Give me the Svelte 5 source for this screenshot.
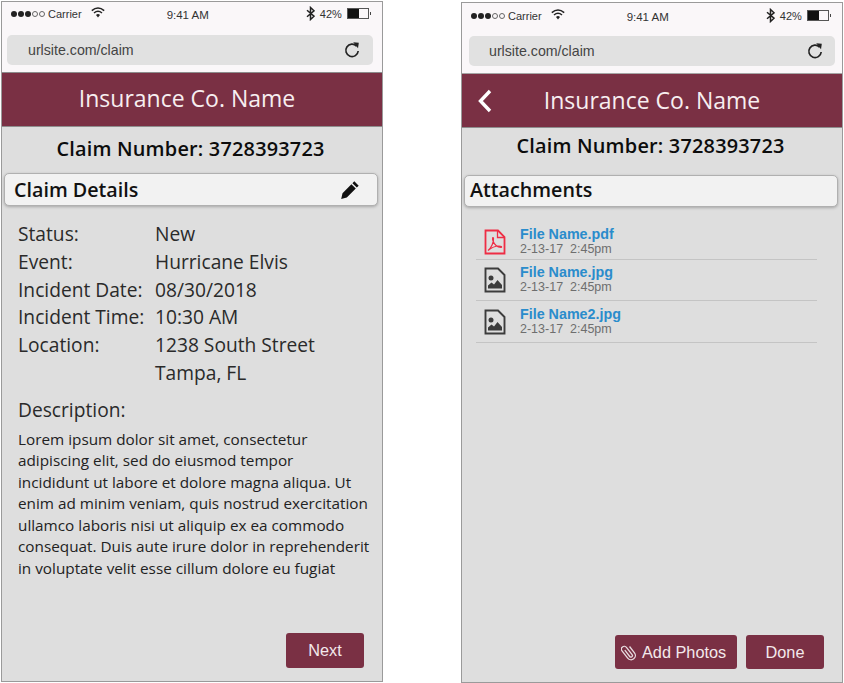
<script>
  const details = [
    ['Status:', 'New'],
    ['Event:', 'Hurricane Elvis'],
    ['Incident Date:', '08/30/2018'],
    ['Incident Time:', '10:30 AM'],
    ['Location:', '1238 South Street'],
    ['', 'Tampa, FL']
  ];
  const lorem = [
    'Lorem ipsum dolor sit amet, consectetur',
    'adipiscing elit, sed do eiusmod tempor',
    'incididunt ut labore et dolore magna aliqua. Ut',
    'enim ad minim veniam, quis nostrud exercitation',
    'ullamco laboris nisi ut aliquip ex ea commodo',
    'consequat. Duis aute irure dolor in reprehenderit',
    'in voluptate velit esse cillum dolore eu fugiat'
  ];
  const files = [
    { name: 'File Name.pdf', kind: 'pdf' },
    { name: 'File Name.jpg', kind: 'img' },
    { name: 'File Name2.jpg', kind: 'img' }
  ];
</script>

{#snippet chrome()}
  <div class="chrome">
    <div class="status">
      <span class="signal"><i></i><i></i><i></i><i class="off"></i><i class="off"></i></span>
      <span class="carrier">Carrier</span>
      <svg class="wifi" width="14" height="11" viewBox="0 0 14 11">
        <path d="M.8 3.600C4.600.4 9.400.4 13.200 3.600M3 6C5.400 4 8.600 4 11 6" fill="none" stroke="#222" stroke-width="1.500"/>
        <path d="M5 8a3 3 0 0 1 4 0L7 10.600z" fill="#222"/>
      </svg>
      <span class="time">9:41 AM</span>
      <svg class="bt" width="9" height="15" viewBox="0 0 9 15">
        <path d="M1 4.200l7 6L4.500 13.500V1.500L8 4.800 1 10.800" fill="none" stroke="#222" stroke-width="1.500"/>
      </svg>
      <span class="pct">42%</span>
      <span class="battery"><b></b></span>
    </div>
    <div class="url">
      <span>urlsite.com/claim</span>
      <svg width="18" height="18" viewBox="0 0 18 18">
        <path d="M13.600 5.200A6.200 6.200 0 1 0 15.200 10" fill="none" stroke="#222" stroke-width="1.700"/>
        <path d="M10.200 1.200l5.600 .6-.8 5.400z" fill="#222"/>
      </svg>
    </div>
  </div>
{/snippet}

<div class="page">
  <section class="phone left">
    {@render chrome()}
    <header class="bar"><h1>Insurance Co. Name</h1></header>
    <h2 class="claim">Claim Number: 3728393723</h2>
    <div class="panel">
      <span>Claim Details</span>
      <svg width="20" height="20" viewBox="0 0 20 20">
        <path d="M14.300 1.300l4.400 4.400-1.900 1.900-4.400-4.400zM11.400 4.200l4.400 4.400-9 9L1.200 19l1.300-5.700z" fill="#111"/>
      </svg>
    </div>
    <div class="details">
      {#each details as [k, v]}
        <div class="row"><span>{k}</span><span>{v}</span></div>
      {/each}
    </div>
    <div class="desc">Description:</div>
    <div class="lorem">
      {#each lorem as l}<div>{l}</div>{/each}
    </div>
    <footer class="foot"><button class="btn">Next</button></footer>
  </section>

  <section class="phone right">
    {@render chrome()}
    <header class="bar">
      <svg class="back" width="16" height="24" viewBox="0 0 16 24">
        <path d="M13 2L3.500 12l9.500 10" fill="none" stroke="#fff" stroke-width="3.400"/>
      </svg>
      <h1>Insurance Co. Name</h1>
    </header>
    <h2 class="claim">Claim Number: 3728393723</h2>
    <div class="panel"><span>Attachments</span></div>
    <ul class="files">
      {#each files as f}
        <li>
          {#if f.kind === 'pdf'}
            <svg width="22" height="26" viewBox="0 0 22 26">
              <path d="M1.500 1.500H14L20.500 8V24.500H1.500z" fill="none" stroke="#ee2d45" stroke-width="1.800"/>
              <path d="M13.500 1.500V8.500H20.500" fill="none" stroke="#ee2d45" stroke-width="1.300"/>
              <path d="M4 21.500C7 19.500 10 13 9.500 9.500 9 7.500 8 9 9 12c1.500 4 4 6 8 6.500 1.500-.5 0-1.500-2-1.500-4 0-8 2-11 4.500z" fill="none" stroke="#ee2d45" stroke-width="1.200"/>
            </svg>
          {:else}
            <svg width="22" height="26" viewBox="0 0 22 26">
              <path d="M1.500 1.500H14L20.500 8V24.500H1.500z" fill="none" stroke="#3c3c3c" stroke-width="1.900"/>
              <circle cx="7" cy="11" r="2.500" fill="#3c3c3c"/>
              <path d="M4 21.500V18.500L7.500 15.500l2.500 2 3.500-4.500 4.500 5v3.500z" fill="#3c3c3c"/>
            </svg>
          {/if}
          <div class="meta">
            <a href="#top">{f.name}</a>
            <small>2-13-17&nbsp; 2:45pm</small>
          </div>
        </li>
      {/each}
    </ul>
    <footer class="foot">
      <button class="btn add">
        <svg width="16" height="18" viewBox="0 0 16 18">
          <path d="M5.800 5v8a1.500 1.500 0 0 0 3 0V3.800a2.800 2.800 0 0 0-5.600 0V13a4.300 4.300 0 0 0 8.600 0V5" transform="rotate(-38 8 9)" fill="none" stroke="#e8dde0" stroke-width="1.300"/>
        </svg>
        Add Photos
      </button>
      <button class="btn">Done</button>
    </footer>
  </section>
</div>

<style>
  :global(body) { margin: 0; background: #fff; }
  .page {
    width: 844px;
    height: 683px;
    display: flex;
    gap: 78px;
    padding-left: 1px;
    box-sizing: border-box;
    overflow: hidden;
    font-family: "Open Sans", "Noto Sans", sans-serif;
    color: #111;
  }
  .phone {
    width: 382px;
    flex: none;
    box-sizing: border-box;
    border: 1px solid #9a9a9a;
    background: #dedede;
    display: flex;
    flex-direction: column;
    height: 681px;
    margin-top: 1px;
  }
  .phone.right { margin-top: 2px; }
  .chrome {
    background: #faf7f9;
    height: 71px;
    padding: 0 9px 0 5px;
    box-sizing: border-box;
    font-family: "Liberation Sans", Arial, sans-serif;
    border-bottom: 1px solid #8c8c8c;
  }
  .right .chrome { padding: 0 7px; border-bottom-color: #a5a5a5; }
  .status {
    height: 33px;
    display: flex;
    align-items: center;
    font-size: 11px;
    color: #333;
    padding: 0 4px;
    position: relative;
    top: -5px;
  }
  .right .status { padding: 0 2px; top: -4px; }
  .signal { display: flex; gap: 1px; }
  .signal i { width: 6px; height: 6px; border-radius: 50%; background: #222; display: block; box-sizing: border-box; }
  .signal i.off { background: none; border: 1px solid #666; }
  .carrier { margin-left: 3px; }
  .wifi { margin-left: 9px; margin-top: -3px; }
  .time { margin-left: 62px; font-size: 11.500px; position: relative; top: 1px; }
  .bt { margin-left: 97px; }
  .pct { margin-left: 5px; }
  .battery {
    margin-left: 5px;
    width: 22px;
    height: 11px;
    border: 1px solid #555;
    box-sizing: border-box;
    position: relative;
    display: block;
  }
  .battery b { display: block; width: 11px; height: 9px; background: #111; }
  .battery::after {
    content: "";
    position: absolute;
    right: -3px;
    top: 3px;
    width: 1px;
    height: 3px;
    background: #444;
  }
  .url {
    height: 30px;
    background: #e1e1e1;
    border-radius: 5px;
    display: flex;
    align-items: center;
    justify-content: space-between;
    padding: 0 12px 0 21px;
    font-size: 14.200px;
    color: #444;
  }
  .right .url { padding: 0 11px 0 20px; }
  .bar {
    height: 54px;
    box-sizing: border-box;
    background: #7a3044;
    border-bottom: 1px solid #8e8e8e;
    display: flex;
    align-items: center;
    justify-content: center;
    position: relative;
    padding-bottom: 2px;
  }
  .left .bar { padding: 0 10px 4px 0; }
  h1 { margin: 0; font-size: 23px; font-weight: 400; color: #f7eef0; }
  .back { position: absolute; left: 15px; top: 15px; }
  .claim {
    margin: 0;
    padding-right: 3px;
    text-align: center;
    font-size: 19.900px;
    font-weight: 600;
    color: #0c0c0c;
    height: 46px;
    line-height: 44px;
    letter-spacing: .2px;
  }
  .right .claim { height: 47px; line-height: 36px; }
  .panel {
    margin: 0 4px 0 2px;
    height: 33px;
    box-sizing: border-box;
    background: #f2f2f2;
    border: 1px solid #b0b0b0;
    border-radius: 5px;
    box-shadow: 0 1px 3px rgba(0,0,0,.25);
    display: flex;
    align-items: center;
    justify-content: space-between;
    padding: 0 17px 0 9px;
    font-size: 19.700px;
    font-weight: 600;
    color: #111;
  }
  .right .panel { height: 32px; padding: 0 17px 3px 5px; }
  .details { margin: 14px 0 0 16px; font-size: 19.200px; color: #2a2a2a; line-height: 27.800px; }
  .row { display: grid; grid-template-columns: 137px 1fr; height: 27.800px; }
  .desc { margin: 9px 0 0 16px; font-size: 19.200px; color: #2a2a2a; line-height: 28px; }
  .lorem { margin: 5px 0 0 16px; font-size: 15.300px; line-height: 21.500px; color: #222; white-space: nowrap; }
  .files { list-style: none; margin: 14px 0 0 14px; padding: 0; width: 341px; font-family: "Liberation Sans", Arial, sans-serif; }
  .files li {
    display: flex;
    align-items: center;
    height: 41px;
    border-bottom: 1px solid #c4c4c4;
    padding-left: 8px;
    box-sizing: border-box;
    gap: 14px;
  }
  .files li:first-child { height: 39px; gap: 14px; padding-top: 4px; }
  .files li:last-child { height: 42px; }
  .files svg { flex: none; }
  .meta { display: flex; flex-direction: column; line-height: 15px; }
  .meta a { color: #2a8ccc; font-size: 14.300px; font-weight: 700; text-decoration: none; }
  .meta small { color: #6e6e6e; font-size: 12.500px; }
  .foot {
    margin-top: auto;
    display: flex;
    justify-content: flex-end;
    gap: 9px;
    padding: 0 18px 13px 0;
  }
  .btn {
    width: 78px;
    height: 35px;
    background: #7a3044;
    border: none;
    border-radius: 3px;
    color: #f3e8eb;
    font-family: "Liberation Sans", Arial, sans-serif;
    font-size: 16.300px;
    padding: 0;
    display: flex;
    align-items: center;
    justify-content: center;
    gap: 3px;
  }
  .right .btn { height: 34px; }
  .btn.add { width: 122px; justify-content: flex-start; padding-left: 6px; gap: 5px; }
</style>
